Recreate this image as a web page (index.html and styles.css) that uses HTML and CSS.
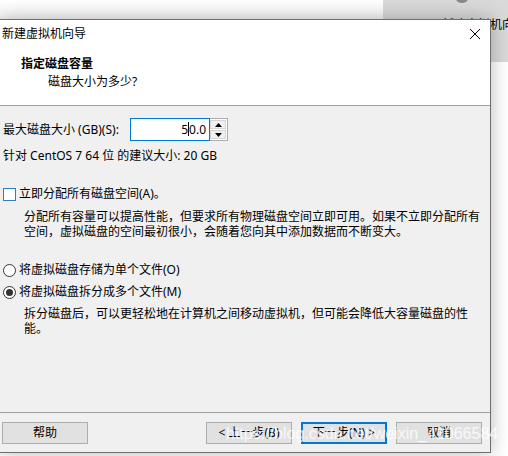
FILE: index.html
```html
<!DOCTYPE html>
<html lang="zh-CN">
<head>
    <meta charset="UTF-8">
    <title>新建虚拟机向导</title>
    <link rel="stylesheet" href="styles.css">
</head>
<body>
    <div class="desktop">
        <!-- window behind the wizard -->
        <div class="back-window">
            <span class="back-icon"></span>
            <span class="back-title">新建虚拟机向导</span>
        </div>

        <div class="dialog">
            <div class="titlebar">
                <span class="title-text">新建虚拟机向导</span>
                <svg class="close-icon" width="12" height="12" viewBox="0 0 12 12">
                    <path d="M1 1 L11 11 M11 1 L1 11" stroke="#000" stroke-width="1" fill="none"/>
                </svg>
            </div>

            <div class="header">
                <div class="header-title">指定磁盘容量</div>
                <div class="header-sub">磁盘大小为多少?</div>
            </div>

            <div class="content">
                <div class="size-row">
                    <span class="size-label">最大磁盘大小 (GB)(S):</span>
                    <div class="spin-input">5<span class="caret"></span>0.0</div>
                    <div class="spin-buttons">
                        <div class="spin-btn">
                            <svg width="7" height="4" viewBox="0 0 7 4"><path d="M0 4 L3.5 0 L7 4 Z" fill="#000"/></svg>
                        </div>
                        <div class="spin-btn">
                            <svg width="7" height="4" viewBox="0 0 7 4"><path d="M0 0 L7 0 L3.5 4 Z" fill="#000"/></svg>
                        </div>
                    </div>
                </div>
                <div class="hint">针对 CentOS 7 64 位 的建议大小: 20 GB</div>

                <div class="option check-option">
                    <span class="checkbox"></span>
                    <span>立即分配所有磁盘空间(A)。</span>
                </div>
                <p class="desc">分配所有容量可以提高性能，但要求所有物理磁盘空间立即可用。如果不立即分配所有<br>空间，虚拟磁盘的空间最初很小，会随着您向其中添加数据而不断变大。</p>

                <div class="option radio-option first">
                    <span class="radio"></span>
                    <span>将虚拟磁盘存储为单个文件(O)</span>
                </div>
                <div class="option radio-option">
                    <span class="radio checked"></span>
                    <span>将虚拟磁盘拆分成多个文件(M)</span>
                </div>
                <p class="desc split-desc">拆分磁盘后，可以更轻松地在计算机之间移动虚拟机，但可能会降低大容量磁盘的性<br>能。</p>
            </div>

            <div class="footer">
                <button class="btn">帮助</button>
                <div class="nav-buttons">
                    <button class="btn">&lt; 上一步(B)</button>
                    <button class="btn default">下一步(N) &gt;</button>
                    <button class="btn">取消</button>
                </div>
            </div>
        </div>

        <div class="watermark">https://blog.csdn.net/weixin_41066584</div>
    </div>
</body>
</html>
```

FILE: styles.css
```css
html, body {
    margin: 0;
    padding: 0;
}
body {
    font-family: "Noto Sans", "Noto Sans CJK SC", sans-serif;
    font-size: 12px;
    color: #000;
    background-color: #fff;
}
.desktop {
    position: relative;
    width: 508px;
    height: 456px;
    overflow: hidden;
    background: linear-gradient(#ffffff, #f6f6f6 20px, #ffffff 60px);
}
.back-window {
    position: absolute;
    left: 383px;
    top: 0;
    width: 125px;
    height: 62px;
    background-color: #d9d9d9;
}
.back-icon {
    position: absolute;
    left: 73px;
    top: -6px;
    width: 12px;
    height: 9px;
    border-radius: 50%;
    background-color: #8a8a8a;
}
.back-title {
    position: absolute;
    left: 59px;
    top: 17px;
    line-height: 16px;
    white-space: nowrap;
}
.dialog {
    position: absolute;
    left: -1px;
    top: 19px;
    width: 492px;
    height: 434px;
    box-sizing: border-box;
    border: 1px solid #6e6e6e;
    background-color: #fff;
    display: flex;
    flex-direction: column;
    box-shadow: 0 0 18px rgba(0, 0, 0, 0.28);
}
.titlebar {
    height: 28px;
    display: flex;
    align-items: center;
    justify-content: space-between;
    padding: 0 9px 0 2px;
    flex-shrink: 0;
}
.title-text {
    line-height: 16px;
}
.close-icon {
    display: block;
}
.header {
    height: 58px;
    padding: 8px 0 0 21px;
    box-sizing: border-box;
    border-bottom: 1px solid #a0a0a0;
    flex-shrink: 0;
}
.header-title {
    font-weight: bold;
    line-height: 16px;
}
.header-sub {
    line-height: 16px;
    margin-top: 2px;
    padding-left: 27px;
}
.content {
    flex: 1;
    background-color: #f0f0f0;
    padding: 12px 0 0 3px;
}
.size-row {
    display: flex;
    align-items: center;
    height: 23px;
}
.size-label {
    width: 127px;
    line-height: 16px;
    white-space: nowrap;
}
.spin-input {
    width: 80px;
    height: 23px;
    box-sizing: border-box;
    border: 1px solid #0078d7;
    background-color: #fff;
    text-align: right;
    padding-right: 3px;
    line-height: 21px;
}
.caret {
    display: inline-block;
    width: 1px;
    height: 14px;
    background-color: #000;
    vertical-align: -2px;
}
.spin-buttons {
    width: 18px;
    height: 23px;
    box-sizing: border-box;
    border: 1px solid #adadad;
    border-left: none;
    background-color: #fff;
    display: flex;
    flex-direction: column;
    gap: 1px;
    padding: 1px 1px 1px 0;
}
.spin-btn {
    flex: 1;
    background-color: #f0f0f0;
    border: 1px solid #d4d4d4;
    display: flex;
    align-items: center;
    justify-content: center;
}
.spin-btn svg {
    display: block;
}
.hint {
    margin-top: 7px;
    line-height: 16px;
}
.option {
    display: flex;
    align-items: center;
    gap: 3px;
    line-height: 16px;
}
.check-option {
    margin-top: 22px;
}
.checkbox {
    width: 13px;
    height: 13px;
    box-sizing: border-box;
    border: 1px solid #2f7bc4;
    background-color: #fff;
}
.desc {
    margin: 7px 0 0 0;
    padding-left: 21px;
    line-height: 15px;
    white-space: nowrap;
}
.radio-option.first {
    margin-top: 23px;
}
.radio-option + .radio-option {
    margin-top: 6px;
}
.radio {
    width: 13px;
    height: 13px;
    box-sizing: border-box;
    border: 1px solid #333;
    border-radius: 50%;
    background-color: #fff;
    display: flex;
    align-items: center;
    justify-content: center;
}
.radio.checked::after {
    content: "";
    width: 7px;
    height: 7px;
    border-radius: 50%;
    background-color: #333;
}
.split-desc {
    margin-top: 6px;
}
.footer {
    height: 40px;
    flex-shrink: 0;
    box-sizing: border-box;
    border-top: 1px solid #a0a0a0;
    background-color: #f0f0f0;
    display: flex;
    justify-content: space-between;
    padding: 9px 8px 0 2px;
}
.nav-buttons {
    display: flex;
    gap: 9px;
}
.btn {
    font-family: inherit;
    font-size: 12px;
    color: #000;
    width: 86px;
    height: 22px;
    box-sizing: border-box;
    border: 1px solid #adadad;
    background-color: #e1e1e1;
    padding: 0;
    line-height: 18px;
}
.btn.default {
    border: 2px solid #0078d7;
}
.watermark {
    position: absolute;
    left: 226px;
    top: 425px;
    font-family: "Liberation Sans", sans-serif;
    font-size: 16px;
    line-height: 18px;
    color: rgba(255, 255, 255, 0.8);
    white-space: nowrap;
}
```
